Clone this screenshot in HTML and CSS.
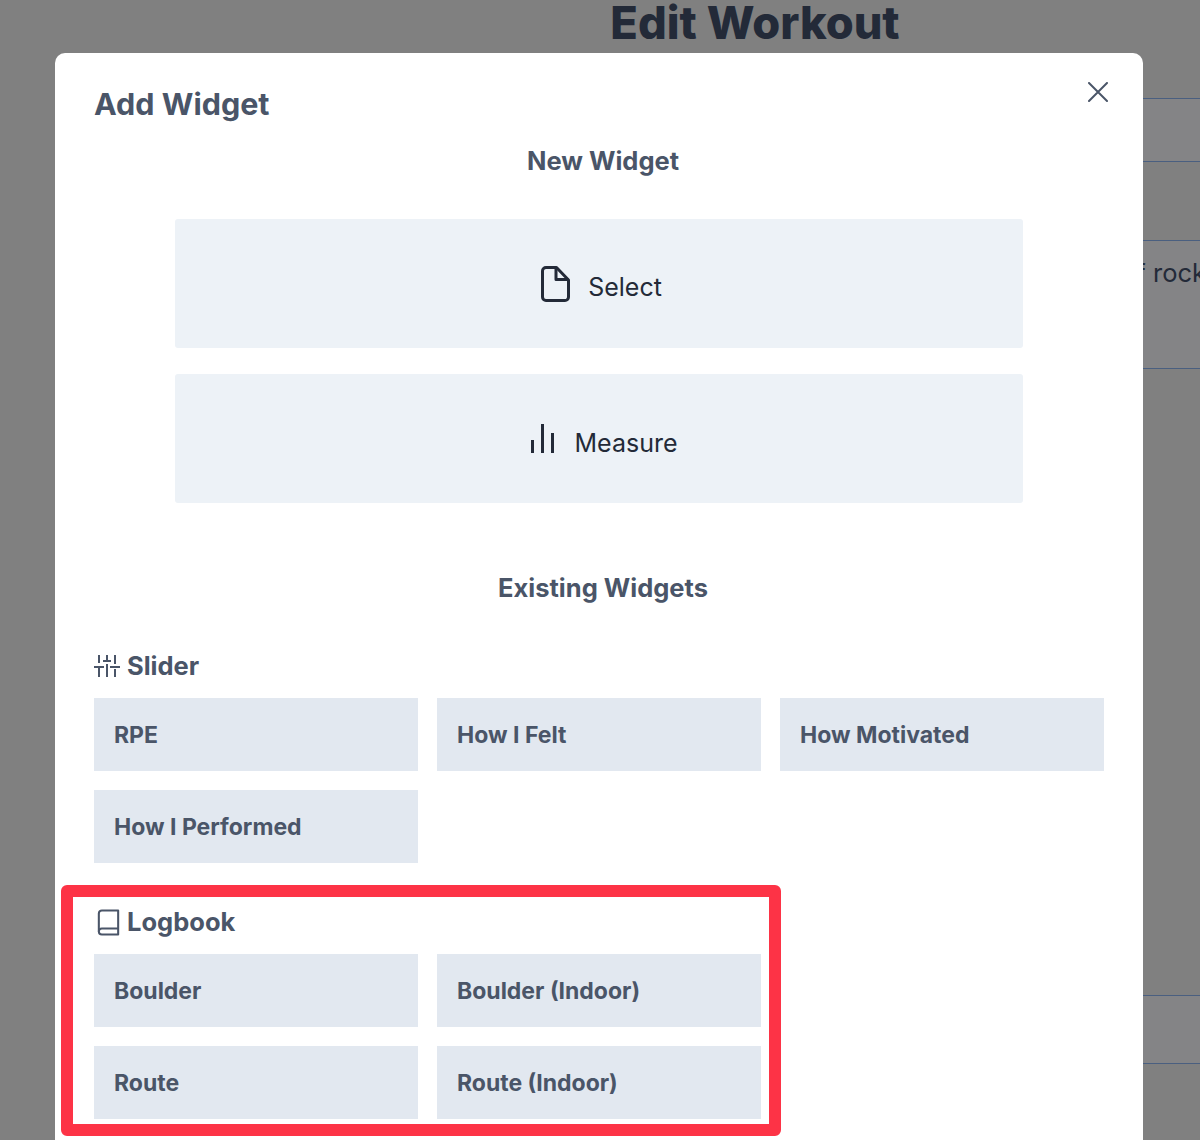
FILE: index.html
```html
<!DOCTYPE html>
<html>
<head>
<meta charset="utf-8">
<title>Edit Workout</title>
<link rel="stylesheet" href="styles.css">
</head>
<body>

<div class="page">
	<h1 class="page-title">Edit Workout</h1>
	<div class="page-rows">
		<div class="page-row row-a"></div>
		<div class="page-row row-b"></div>
		<div class="page-row row-c">of rock</div>
		<div class="page-row row-d"></div>
		<div class="page-row row-e"></div>
		<div class="page-row row-f"></div>
	</div>
</div>

<div class="modal">
	<button class="close" aria-label="Close">
		<svg width="20" height="20" viewBox="0 0 20 20" fill="none" stroke="#4a5568" stroke-width="2" stroke-linecap="round"><path d="M1 1l18 18M19 1L1 19"/></svg>
	</button>
	<h2 class="modal-title">Add Widget</h2>

	<h3 class="section-title new-title">New Widget</h3>
	<div class="new-list">
		<button class="new-btn">
			<svg class="icon-file" width="29" height="36" viewBox="0 0 29 36" fill="none" stroke="#232a38" stroke-width="3" stroke-linejoin="round"><path d="M5 1.500h10.500L27.500 14v17a3.500 3.500 0 0 1-3.500 3.500H5A3.500 3.500 0 0 1 1.500 31V5A3.500 3.500 0 0 1 5 1.500z"/><path d="M15 1.500V13.500H27.500"/></svg>
			Select
		</button>
		<button class="new-btn measure-btn">
			<svg class="icon-bars" width="25" height="30" viewBox="0 0 25 30" fill="none" stroke="#232a38" stroke-width="3"><path d="M2.500 29V16M12.500 29V0M22.500 29V9"/></svg>
			Measure
		</button>
	</div>

	<h3 class="section-title existing-title">Existing Widgets</h3>

	<h4 class="group-title slider-title">
		<svg width="26" height="22" viewBox="0 0 26 22" fill="none" stroke="#4a5568" stroke-width="2"><path d="M5 0v8M5 13v9M13 0v5M13 9v13M21 0v9M21 14v8M0 12h10M9 6h8M16 12h10"/></svg>
		Slider
	</h4>
	<div class="tiles">
		<button class="tile">RPE</button>
		<button class="tile">How I Felt</button>
		<button class="tile">How Motivated</button>
		<button class="tile">How I Performed</button>
	</div>

	<h4 class="group-title logbook-title">
		<svg width="29" height="29" viewBox="0 0 24 24" fill="none" stroke="#4a5568" stroke-width="1.700" stroke-linejoin="round"><path d="M4 19.500A2.500 2.500 0 0 1 6.500 17H20"/><path d="M6.500 2H20v20H6.500A2.500 2.500 0 0 1 4 19.500v-15A2.500 2.500 0 0 1 6.500 2z"/></svg>
		Logbook
	</h4>
	<div class="tiles tiles-two">
		<button class="tile">Boulder</button>
		<button class="tile">Boulder (Indoor)</button>
		<button class="tile">Route</button>
		<button class="tile">Route (Indoor)</button>
	</div>
</div>

<div class="callout"></div>

</body>
</html>
```

FILE: styles.css
```css
html, body {
	margin: 0;
	height: 1140px;
	overflow: hidden;
}

body {
	position: relative;
	background: #808080;
	font-family: Inter, "Liberation Sans", sans-serif;
}

h1, h2, h3, h4 {
	margin: 0;
}

button {
	font-family: inherit;
	border: 0;
	cursor: pointer;
}

/* page behind the overlay */
.page {
	padding-left: 310px;
}

.page-title {
	height: 46px;
	line-height: 46px;
	font-size: 45.200px;
	font-weight: 800;
	color: #232a38;
	text-align: center;
}

.page-rows {
	padding-top: 52px;
}

.page-row {
	box-sizing: border-box;
	border-top: 1px solid #4a5f80;
	color: #232a38;
	font-size: 25.500px;
	white-space: nowrap;
	text-align: right;
}

.row-a { height: 63px; background: #848486; }
.row-b { height: 79px; }
.row-c { height: 128px; padding-top: 16px; margin-right: -6px; background: #848486; }
.row-d { height: 627px; }
.row-e { height: 68px; background: #848486; }
.row-f { height: 80px; }

/* modal */
.modal {
	position: absolute;
	left: 55px;
	top: 53px;
	box-sizing: border-box;
	width: 1088px;
	height: 1100px;
	padding: 32px 31px 0 39px;
	background: #fff;
	border-radius: 10px;
	color: #4a5568;
}

.close {
	position: absolute;
	top: 29px;
	right: 35px;
	padding: 0;
	background: none;
	line-height: 0;
}

.modal-title {
	height: 38px;
	line-height: 38px;
	font-size: 30.500px;
	font-weight: 700;
}

.section-title {
	height: 32px;
	line-height: 32px;
	font-size: 25.500px;
	font-weight: 700;
	text-align: center;
}

.new-title {
	margin-top: 22px;
}

.new-list {
	display: flex;
	flex-direction: column;
	gap: 26px;
	width: 848px;
	margin: 42px 0 0 81px;
}

.new-btn {
	display: flex;
	align-items: center;
	justify-content: center;
	height: 129px;
	padding: 6px 0 0 5px;
	background: #edf2f7;
	border-radius: 3px;
	font-size: 25px;
	color: #232a38;
}

.measure-btn {
	padding-top: 8px;
}

.icon-file {
	margin: -6px 18px 0 0;
}

.icon-bars {
	margin: -8px 20px 0 4px;
}

.existing-title {
	margin-top: 69px;
}

.group-title {
	display: flex;
	align-items: center;
	gap: 7px;
	height: 32px;
	line-height: 32px;
	font-size: 25.500px;
	font-weight: 700;
}

.slider-title {
	margin-top: 46px;
}

.logbook-title {
	margin-top: 43px;
	gap: 4px;
}

.tiles {
	display: grid;
	grid-template-columns: repeat(3, 324px);
	gap: 19px;
	margin-top: 16px;
}

.tiles-two {
	grid-template-columns: repeat(2, 324px);
}

.tile {
	height: 73px;
	padding: 0 20px;
	background: #e2e8f0;
	font-size: 23px;
	font-weight: 700;
	color: #4a5568;
	text-align: left;
}

/* red annotation drawn over the screenshot */
.callout {
	position: absolute;
	left: 61px;
	top: 885px;
	box-sizing: border-box;
	width: 720px;
	height: 251px;
	border: 12px solid #fd3346;
	border-radius: 6px;
}
```
